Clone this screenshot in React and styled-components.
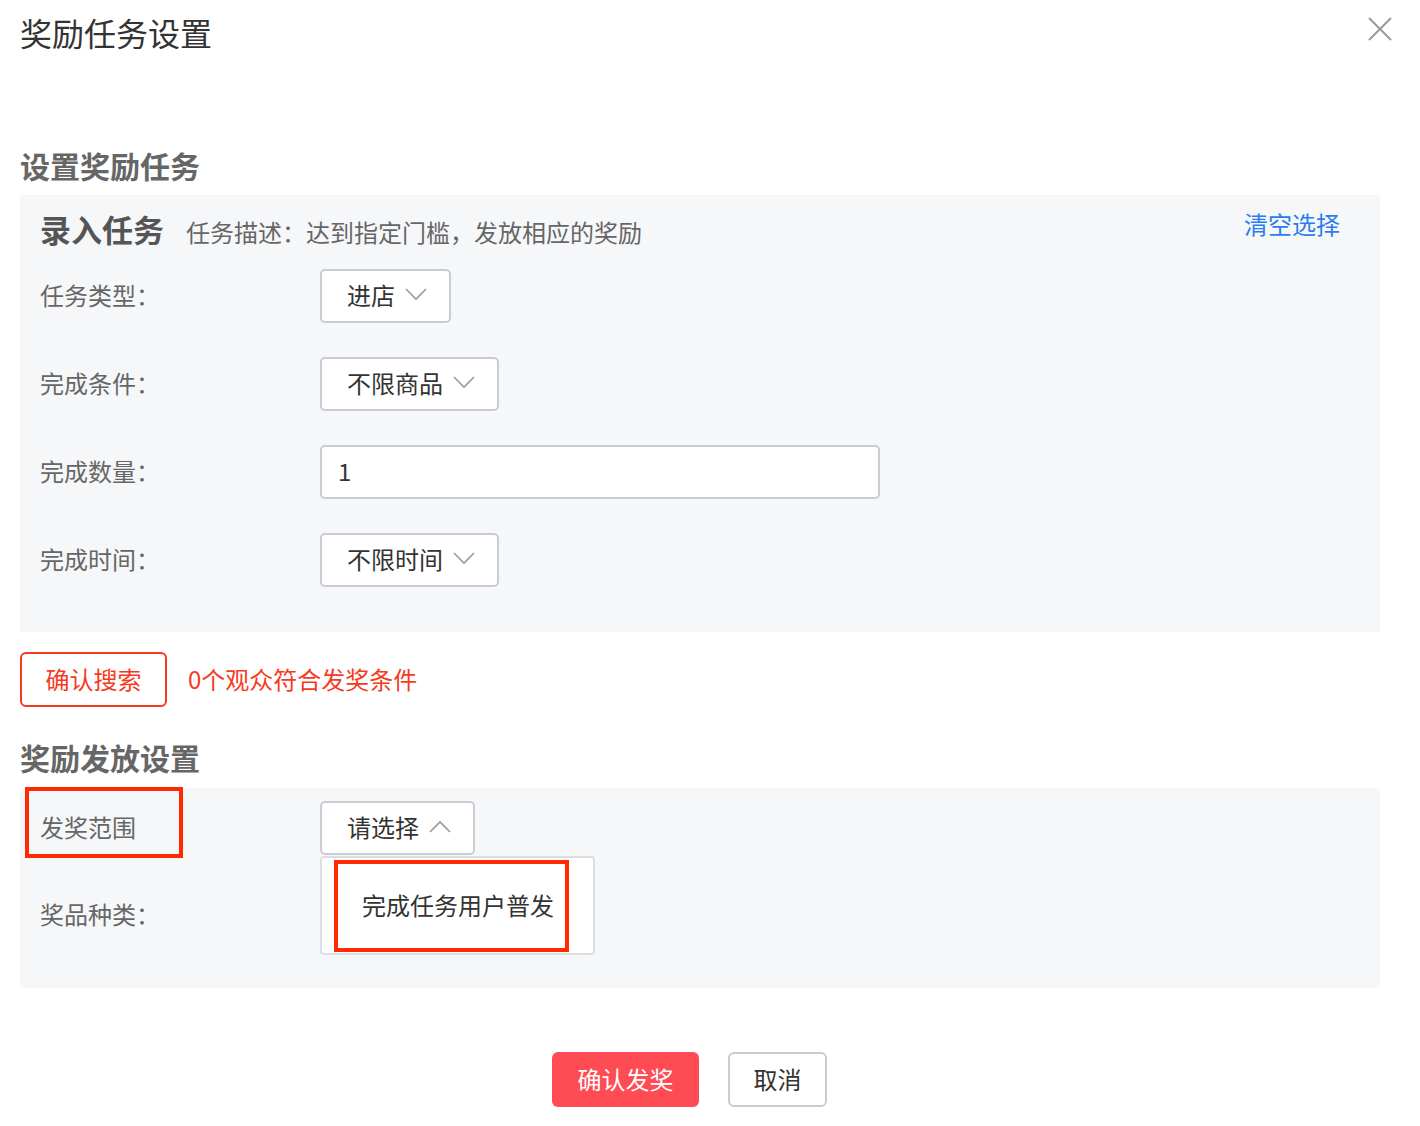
import React from "react";
import styled, { createGlobalStyle } from "styled-components";

const GlobalStyle = createGlobalStyle`
  body {
    margin: 0;
    background: #fff;
    font-family: "PingFang SC", "Noto Sans CJK SC", "Noto Sans", sans-serif;
  }
  *, *::before, *::after { box-sizing: border-box; }
`;

const Page = styled.div`
  width: 1420px;
  padding: 0 40px 19px 20px;
`;

const Header = styled.div`
  display: flex;
  justify-content: space-between;
  align-items: flex-start;
  padding-top: 12px;
  height: 145px;
`;

const Title = styled.h1`
  margin: 0;
  font-size: 32px;
  line-height: 40px;
  font-weight: 400;
  color: #333;
`;

const CloseBtn = styled.button`
  border: none;
  background: none;
  padding: 0;
  margin: 5px -12px 0 0;
  width: 24px;
  height: 24px;
  cursor: pointer;
  svg { display: block; }
`;

const SectionTitle = styled.h2`
  margin: 0 0 ${(p) => p.$gap}px;
  font-size: 30px;
  line-height: 40px;
  font-weight: 700;
  color: #666;
`;

const Panel = styled.div`
  background: #f6f7f9;
  padding: ${(p) => p.$pad};
  display: flex;
  flex-direction: column;
  gap: ${(p) => p.$gap}px;
`;

const PanelHead = styled.div`
  display: flex;
  align-items: center;
  height: 40px;
  padding-right: 40px;
  margin-bottom: -14px;
`;

const HeadTitle = styled.span`
  font-size: 31px;
  font-weight: 700;
  color: #555;
  line-height: 40px;
`;

const HeadDesc = styled.span`
  margin-left: 22px;
  margin-top: 4px;
  font-size: 24px;
  color: #666;
`;

const ClearLink = styled.a`
  margin-left: auto;
  margin-top: -12px;
  font-size: 24px;
  color: #2a7cf3;
  cursor: pointer;
`;

const Row = styled.div`
  display: flex;
  align-items: center;
  height: 54px;
  position: relative;
`;

const Label = styled.label`
  position: relative;
  width: 280px;
  height: 100%;
  display: flex;
  align-items: center;
  padding-bottom: 3px;
  font-size: 24px;
  color: #666;
  ${(p) =>
    p.$marked &&
    `
    &::after {
      content: "";
      position: absolute;
      left: -15px;
      top: -14px;
      width: 158px;
      height: 71px;
      border: 4px solid #ff2a00;
    }
  `}
`;

const SelectBox = styled.div`
  position: relative;
  height: 54px;
  display: flex;
  align-items: center;
  gap: 10px;
  padding: 0 22px 3px 25px;
  background: #fff;
  border: 2px solid #c9ccd5;
  border-radius: 5px;
  font-size: 24px;
  color: #333;
  cursor: pointer;
`;

const Chevron = ({ up }) => (
  <svg width="22" height="13" viewBox="0 0 22 13">
    <polyline
      points={up ? "1,12 11,2 21,12" : "1,1 11,11 21,1"}
      fill="none"
      stroke="#999"
      strokeWidth="1.6"
    />
  </svg>
);

const Input = styled.input`
  width: 560px;
  height: 54px;
  padding: 0 16px 3px;
  border: 2px solid #c9ccd5;
  border-radius: 5px;
  background: #fff;
  font-size: 24px;
  font-family: inherit;
  color: #333;
  outline: none;
`;

const Dropdown = styled.div`
  position: absolute;
  left: -2px;
  top: 53px;
  width: 275px;
  height: 99px;
  background: #fff;
  border: 2px solid #dcdee4;
  border-radius: 4px;
  padding: 2px 0 0 12px;
  z-index: 2;
`;

const Option = styled.div`
  width: 235px;
  height: 92px;
  border: 4px solid #ff2a00;
  padding: 0 0 3px 24px;
  display: flex;
  align-items: center;
  font-size: 24px;
  color: #333;
`;

const ActionRow = styled.div`
  display: flex;
  align-items: center;
  gap: 21px;
  margin: 20px 0 30px;
`;

const Button = styled.button`
  height: 55px;
  width: ${(p) => p.$w}px;
  border-radius: 6px;
  padding: 0 0 3px;
  font-size: 24px;
  font-family: inherit;
  cursor: pointer;
  ${(p) =>
    p.$variant === "outlineRed"
      ? `background: #fff; border: 2px solid #f53a1e; color: #f53a1e;`
      : p.$variant === "primary"
      ? `background: #ff4b53; border: none; color: #fff;`
      : `background: #fff; border: 2px solid #c9ccd5; color: #333;`}
`;

const Hint = styled.span`
  font-size: 24px;
  color: #f53a1e;
  margin-bottom: 3px;
`;

const Footer = styled.div`
  display: flex;
  justify-content: center;
  gap: 29px;
  margin-top: 64px;
  padding-right: 21px;
`;

export default function App() {
  return (
    <Page>
      <GlobalStyle />
      <Header>
        <Title>奖励任务设置</Title>
        <CloseBtn aria-label="close">
          <svg width="24" height="24" viewBox="0 0 24 24">
            <path d="M1 1L23 23M23 1L1 23" stroke="#9a9a9a" strokeWidth="2" />
          </svg>
        </CloseBtn>
      </Header>

      <SectionTitle $gap={10}>设置奖励任务</SectionTitle>
      <Panel $pad="14px 0 45px 20px" $gap={34}>
        <PanelHead>
          <HeadTitle>录入任务</HeadTitle>
          <HeadDesc>任务描述：达到指定门槛，发放相应的奖励</HeadDesc>
          <ClearLink>清空选择</ClearLink>
        </PanelHead>
        <Row>
          <Label>任务类型：</Label>
          <SelectBox>
            进店 <Chevron />
          </SelectBox>
        </Row>
        <Row>
          <Label>完成条件：</Label>
          <SelectBox>
            不限商品 <Chevron />
          </SelectBox>
        </Row>
        <Row>
          <Label>完成数量：</Label>
          <Input defaultValue="1" />
        </Row>
        <Row>
          <Label>完成时间：</Label>
          <SelectBox>
            不限时间 <Chevron />
          </SelectBox>
        </Row>
      </Panel>

      <ActionRow>
        <Button $variant="outlineRed" $w={147}>确认搜索</Button>
        <Hint>0个观众符合发奖条件</Hint>
      </ActionRow>

      <SectionTitle $gap={11}>奖励发放设置</SectionTitle>
      <Panel $pad="13px 0 46px 20px" $gap={33}>
        <Row>
          <Label $marked>发奖范围</Label>
          <SelectBox>
            请选择 <Chevron up />
            <Dropdown>
              <Option>完成任务用户普发</Option>
            </Dropdown>
          </SelectBox>
        </Row>
        <Row>
          <Label>奖品种类：</Label>
        </Row>
      </Panel>

      <Footer>
        <Button $variant="primary" $w={147}>确认发奖</Button>
        <Button $w={99}>取消</Button>
      </Footer>
    </Page>
  );
}
